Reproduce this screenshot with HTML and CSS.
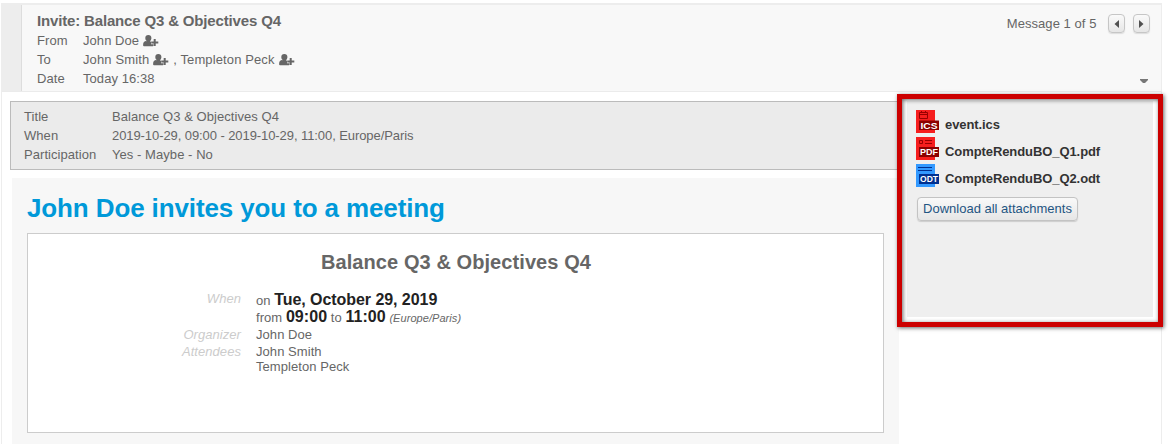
FILE: index.html
```html
<!DOCTYPE html>
<html lang="en">
<head>
<meta charset="utf-8">
<title>Invite: Balance Q3 &amp; Objectives Q4</title>
<link rel="stylesheet" href="styles.css">
</head>
<body>
<svg class="defs" width="0" height="0" aria-hidden="true">
  <symbol id="user-plus" viewBox="0 0 16 12">
    <path d="M5.300 0C7.300 0 8.400 1.300 8.400 3.100c0 1.400-.7 2.700-1.600 3.200L8 6.700v2.500h2.500v1.300c0 .4-.2.700-.7.700H1C.4 11.200.1 10.900.1 10.200.1 8 .9 6.400 2.700 6.100l1.100.1C2.900 5.700 2.300 4.500 2.300 3.100 2.300 1.300 3.400 0 5.300 0z"/>
    <path d="M10.700 4h2v2.500h2.600v1.900h-2.600v2.500h-2V8.400H8.200V6.500h2.500z"/>
  </symbol>
</svg>
<main class="message">
  <header class="head">
    <div class="strip"></div>
    <div class="summary">
      <h1 class="subject">Invite: Balance Q3 &amp; Objectives Q4</h1>
      <dl class="headers">
        <dt>From</dt><dd>John Doe <svg class="add"><use href="#user-plus"/></svg></dd>
        <dt>To</dt><dd class="to">John Smith <svg class="add"><use href="#user-plus"/></svg> , Templeton Peck <svg class="add"><use href="#user-plus"/></svg></dd>
        <dt>Date</dt><dd>Today 16:38</dd>
      </dl>
    </div>
    <div class="tools">
      <div class="pager">
        <span class="count">Message 1 of 5</span>
        <button class="nav"><svg width="5" height="8"><path d="M5 0v8L.5 4z"/></svg></button>
        <button class="nav"><svg width="5" height="8"><path d="M0 0v8l4.500-4z"/></svg></button>
      </div>
      <svg class="more" width="8" height="4"><path d="M0 0h8v1L5 4H3L0 1z"/></svg>
    </div>
  </header>
  <div class="content">
    <div class="body">
      <dl class="event">
        <dt>Title</dt><dd>Balance Q3 &amp; Objectives Q4</dd>
        <dt>When</dt><dd class="range">2019-10-29, 09:00 - 2019-10-29, 11:00, Europe/Paris</dd>
        <dt>Participation</dt><dd>Yes - Maybe - No</dd>
      </dl>
      <section class="invite">
        <h2 class="invite-title">John Doe invites you to a meeting</h2>
        <div class="card">
          <h3 class="card-title">Balance Q3 &amp; Objectives Q4</h3>
          <dl class="details">
            <dt>When</dt>
            <dd class="when">on <b>Tue, October 29, 2019</b><br>from <b class="time">09:00</b> to <b class="time">11:00</b> <i>(Europe/Paris)</i></dd>
            <dt>Organizer</dt><dd>John Doe</dd>
            <dt>Attendees</dt><dd>John Smith<br>Templeton Peck</dd>
          </dl>
        </div>
      </section>
    </div>
    <aside class="attachments">
      <ul class="files">
        <li><svg class="file" viewBox="0 0 23 23"><path fill="#f61e1e" d="M0 0h19v23H0z"/><path fill="none" stroke="#980000" d="M3.500 2.500h8v6h-8zM3 4.500h9M5.500 1v2M9.500 1v2"/><path fill="#8b0000" d="M3 10.500h20V20H3z"/><text x="4.500" y="18.500" textLength="17" lengthAdjust="spacingAndGlyphs">ICS</text></svg>event.ics</li>
        <li><svg class="file" viewBox="0 0 23 23"><path fill="#f61e1e" d="M0 0h19v23H0z"/><path fill="none" stroke="#980000" d="M3.500 3.500h3v3h-3zM9 3.500h7M9 6.500h7"/><path fill="#8b0000" d="M3 10h20v10H3z"/><text x="4" y="18.300" textLength="18" lengthAdjust="spacingAndGlyphs">PDF</text></svg>CompteRenduBO_Q1.pdf</li>
        <li><svg class="file" viewBox="0 0 23 23"><path fill="#3399ff" d="M0 0h19v23H0z"/><path fill="none" stroke="#003090" d="M2 3.500h14M2 6.500h14"/><path fill="#003090" d="M3 10h20v10H3z"/><text x="4" y="18.300" textLength="18" lengthAdjust="spacingAndGlyphs">ODT</text></svg>CompteRenduBO_Q2.odt</li>
      </ul>
      <button class="download">Download all attachments</button>
      <div class="highlight"></div>
    </aside>
  </div>
</main>
</body>
</html>
```
FILE: styles.css
```css
* { box-sizing: border-box; margin: 0; padding: 0; }
body {
  height: 444px;
  overflow: hidden;
  background: #fff;
  color: #666;
  font: 13px/19px "Liberation Sans", Arial, sans-serif;
  letter-spacing: .06px;
}
.defs { position: absolute; }
.message {
  width: 1161px;
  height: 441px;
  margin: 3px 0 0 1px;
  border: 1px solid #ededed;
  border-width: 2px 1px 0;
}
.head {
  display: flex;
  height: 87px;
  border-bottom: 1px solid #ebebeb;
  background: #f8f8f8;
}
.strip { width: 20px; background: #ededed; border-right: 1px solid #ddd; }
.summary { flex: 1; padding: 5px 0 0 15px; }
.subject { font-size: 15px; line-height: 21px; letter-spacing: -.16px; }
.headers { display: grid; grid-template-columns: 46px 1fr; }
.to { letter-spacing: .12px; }
.add { width: 16px; height: 12px; margin-left: .5px; vertical-align: -2px; fill: #666; }
.tools { display: flex; flex-direction: column; align-items: flex-end; padding: 8px 11px 0 0; }
.pager { display: flex; align-items: center; height: 21px; }
.count { margin: 0 11.500px 1px 0; }
.nav {
  display: flex;
  align-items: center;
  justify-content: center;
  width: 17px;
  height: 19px;
  border: 1px solid #c6c6c6;
  border-radius: 4px;
  background: linear-gradient(#fafafa, #e6e6e6);
  box-shadow: 0 1px 1px #ddd;
  fill: #505050;
}
.nav + .nav { margin-left: 8px; }
.more { margin: 45px 2px 0 0; fill: #777; }
.content { display: flex; padding: 9px 8px 0; }
.body { width: 889px; }
.event {
  display: grid;
  grid-template-columns: 88px 1fr;
  height: 69px;
  padding: 5px 13px;
  border: 1px solid #bbb;
  background: #ebebeb;
}
.range { letter-spacing: -.08px; }
.invite { height: 266px; margin: 8px 0 0 2px; padding: 15px; background: #f7f7f7; }
.invite-title { color: #0099d9; font-size: 26px; line-height: 30px; letter-spacing: -.12px; }
.card { height: 200px; margin-top: 10px; border: 1px solid #ccc; background: #fff; }
.card-title { padding: 16px 0 0 1px; font-size: 20px; line-height: 24px; text-align: center; letter-spacing: .08px; }
.details {
  display: grid;
  grid-template-columns: 213px 1fr;
  grid-template-rows: 34px 15px 30px;
  column-gap: 15px;
  row-gap: 2px;
  margin-top: 17px;
  line-height: 15px;
}
.details dt { color: #ccc; font-style: italic; text-align: right; }
.details .when { padding-top: 1px; line-height: 17px; }
.details b { color: #222; font-size: 16px; line-height: 16px; letter-spacing: -.06px; }
.details .time { letter-spacing: .05px; }
.details i { font-size: 11px; line-height: 11px; }
.attachments {
  position: relative;
  width: 246px;
  height: 216px;
  margin-left: 8px;
  padding: 9px;
  background: #efefef;
}
.files { list-style: none; color: #333; font-weight: bold; letter-spacing: -.08px; }
.files li { display: flex; align-items: center; gap: 6px; height: 27px; padding-top: 1px; line-height: 27px; }
.file { width: 23px; height: 23px; margin-top: -5px; }
.file text { fill: #fff; font: bold 9.500px "Liberation Sans", Arial, sans-serif; letter-spacing: 0; }
.download {
  display: block;
  width: 161px;
  height: 24px;
  margin: 6px 0 0 1px;
  padding-bottom: 1px;
  border: 1px solid #c3c3c3;
  border-radius: 4px;
  background: linear-gradient(#f9f9f9, #e6e6e6);
  box-shadow: 0 1px 1px #ccc;
  color: #1f5582;
  font: 13px "Liberation Sans", Arial, sans-serif;
}
.highlight {
  position: absolute;
  inset: -7px -10px -10px;
  border: 5px solid #c00;
  box-shadow: 1px 1px 4px rgba(0, 0, 0, .6), inset 1px 1px 4px rgba(0, 0, 0, .6);
}
```
